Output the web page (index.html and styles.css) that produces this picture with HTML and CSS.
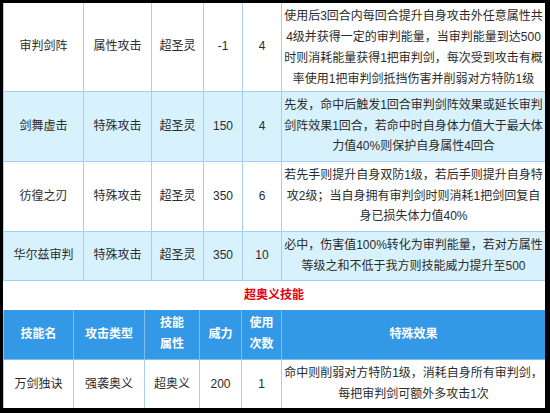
FILE: index.html
```html
<!DOCTYPE html>
<html lang="zh-CN">
<head>
<meta charset="utf-8">
<title>技能表</title>
<link rel="stylesheet" href="styles.css">
</head>
<body>
<div class="frame">
  <table class="skills top">
    <colgroup>
      <col class="c1"><col class="c2"><col class="c3"><col class="c4"><col class="c5"><col class="c6">
    </colgroup>
    <tbody>
      <tr class="r1">
        <td>审判剑阵</td><td>属性攻击</td><td>超圣灵</td><td>-1</td><td>4</td>
        <td class="desc first"><div class="txt">使用后3回合内每回合提升自身攻击外任意属性共4级并获得一定的审判能量，当审判能量到达500时则消耗能量获得1把审判剑，每次受到攻击有概率使用1把审判剑抵挡伤害并削弱对方特防1级</div></td>
      </tr>
      <tr class="r3 alt">
        <td>剑舞虚击</td><td>特殊攻击</td><td>超圣灵</td><td>150</td><td>4</td>
        <td class="desc"><div class="txt">先发，命中后触发1回合审判剑阵效果或延长审判剑阵效果1回合，若命中时自身体力值大于最大体力值40%则保护自身属性4回合</div></td>
      </tr>
      <tr class="r3">
        <td>彷徨之刃</td><td>特殊攻击</td><td>超圣灵</td><td>350</td><td>6</td>
        <td class="desc"><div class="txt">若先手则提升自身双防1级，若后手则提升自身特攻2级；当自身拥有审判剑时则消耗1把剑回复自身已损失体力值40%</div></td>
      </tr>
      <tr class="r2 alt">
        <td>华尔兹审判</td><td>特殊攻击</td><td>超圣灵</td><td>350</td><td>10</td>
        <td class="desc"><div class="txt">必中，伤害值100%转化为审判能量，若对方属性等级之和不低于我方则技能威力提升至500</div></td>
      </tr>
    </tbody>
  </table>
  <div class="title">超奥义技能</div>
  <table class="skills bottom">
    <colgroup>
      <col class="d1"><col class="d2"><col class="d3"><col class="d4"><col class="d5"><col class="d6">
    </colgroup>
    <thead>
      <tr class="head">
        <th>技能名</th><th>攻击类型</th><th>技能<br>属性</th><th>威力</th><th>使用<br>次数</th><th>特殊效果</th>
      </tr>
    </thead>
    <tbody>
      <tr class="r2">
        <td>万剑独诀</td><td>强袭奥义</td><td>超奥义</td><td>200</td><td>1</td>
        <td class="desc"><div class="txt">命中则削弱对方特防1级，消耗自身所有审判剑，每把审判剑可额外多攻击1次</div></td>
      </tr>
    </tbody>
  </table>
</div>
</body>
</html>
```
FILE: styles.css
```css
html, body {
  margin: 0;
  padding: 0;
  background: #000;
}
.frame {
  margin: 3px 5px 0 3px;
  height: 405px;
  background: #fff;
  overflow: hidden;
  font-family: "Liberation Sans", "Noto Sans CJK SC", sans-serif;
  font-size: 12px;
  color: #2b2b2b;
}
.skills {
  border-collapse: collapse;
  table-layout: fixed;
  width: 542px;
}
.skills td, .skills th {
  border: 1px solid #a9cdee;
  text-align: center;
  vertical-align: middle;
  padding: 0;
  line-height: 20.8px;
}
.top tr:first-child td {
  border-top: none;
}
.c1 { width: 80px; }
.c2 { width: 68px; }
.c3 { width: 52px; }
.c4 { width: 39px; }
.c5 { width: 39px; }
.c6 { width: 264px; }
.d1 { width: 70px; }
.d2 { width: 71px; }
.d3 { width: 55px; }
.d4 { width: 42px; }
.d5 { width: 40px; }
.d6 { width: 264px; }
.r1 { height: 88px; }
.r3 { height: 70px; }
.r2 { height: 49px; }
.alt td {
  background: #d8f2fd;
}
.desc .txt {
  width: 262px;
  margin: 0 auto;
}
.desc.first {
  padding-top: 2px;
}
.title {
  height: 29px;
  line-height: 29px;
  text-align: center;
  color: #e8000f;
  font-weight: bold;
  font-size: 12px;
}
.head {
  height: 50px;
}
.head th {
  background: #3399e6;
  color: #fff;
  font-weight: bold;
  border-color: #7ebdef;
  border-top: none;
}
```
